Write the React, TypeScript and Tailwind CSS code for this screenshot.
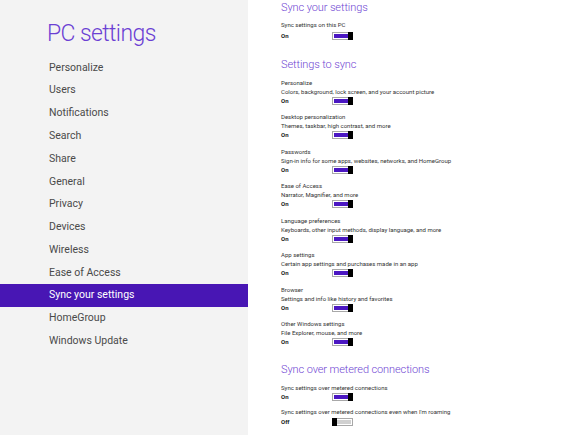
import React from 'react';

const navItems = [
  'Personalize',
  'Users',
  'Notifications',
  'Search',
  'Share',
  'General',
  'Privacy',
  'Devices',
  'Wireless',
  'Ease of Access',
  'Sync your settings',
  'HomeGroup',
  'Windows Update',
];

const syncItems = [
  { title: 'Personalize', desc: 'Colors, background, lock screen, and your account picture' },
  { title: 'Desktop personalization', desc: 'Themes, taskbar, high contrast, and more' },
  { title: 'Passwords', desc: 'Sign-in info for some apps, websites, networks, and HomeGroup' },
  { title: 'Ease of Access', desc: 'Narrator, Magnifier, and more' },
  { title: 'Language preferences', desc: 'Keyboards, other input methods, display language, and more' },
  { title: 'App settings', desc: 'Certain app settings and purchases made in an app' },
  { title: 'Browser', desc: 'Settings and info like history and favorites' },
  { title: 'Other Windows settings', desc: 'File Explorer, mouse, and more' },
];

const Toggle = ({ on }: { on: boolean }) => (
  <div className="relative h-[8px] w-[21px] border border-[#a8a8a8] bg-white p-[1px]">
    <div className={on ? 'h-full w-full bg-[#4b17c2]' : 'h-full w-full bg-[#d0d0d0]'} />
    <div
      className={
        on
          ? 'absolute right-[-1px] top-[-1px] h-[8px] w-[5px] bg-black'
          : 'absolute left-[-1px] top-[-1px] h-[8px] w-[5px] bg-black'
      }
    />
  </div>
);

const ToggleRow = ({ on }: { on: boolean }) => (
  <div className="flex h-[10px] items-center">
    <span className="w-[51px] text-[6px] font-bold leading-none text-[#222]">{on ? 'On' : 'Off'}</span>
    <Toggle on={on} />
  </div>
);

const SectionTitle = ({ children, className = '' }: { children: React.ReactNode; className?: string }) => (
  <h2 className={`h-[15px] text-[11px] font-light leading-[15px] tracking-[-0.1px] text-[#6f45d3] ${className}`}>
    {children}
  </h2>
);

const App = () => {
  return (
    <div className="flex h-[435px] w-[580px] overflow-hidden bg-white font-['Roboto','Open_Sans',sans-serif]">
      <aside className="h-full w-[248px] shrink-0 bg-[#f3f3f3]">
        <h1 className="pl-[47px] pt-[22px] text-[23px] font-light leading-none tracking-[-0.6px] text-[#6b3fd3]">
          PC settings
        </h1>
        <ul className="mt-[11px]">
          {navItems.map((item) => (
            <li
              key={item}
              className={
                item === 'Sync your settings'
                  ? 'flex h-[22.8px] items-center bg-[#4816b4] pl-[49px] text-[10.5px] text-white'
                  : 'flex h-[22.8px] items-center pl-[49px] text-[10.5px] text-[#4a4a4a]'
              }
            >
              {item}
            </li>
          ))}
        </ul>
      </aside>

      <main className="flex-1 pl-[33px] text-[6px] text-[#333]">
        <SectionTitle>Sync your settings</SectionTitle>
        <p className="mt-[5px] h-[9px] leading-[9px]">Sync settings on this PC</p>
        <div className="mt-[2px]">
          <ToggleRow on />
        </div>

        <SectionTitle className="mt-[15.5px]">Settings to sync</SectionTitle>
        <div className="mt-[6px] flex flex-col gap-[6.5px]">
          {syncItems.map((s) => (
            <div key={s.title}>
              <p className="h-[9px] leading-[9px]">{s.title}</p>
              <p className="h-[9px] leading-[9px]">{s.desc}</p>
              <ToggleRow on />
            </div>
          ))}
        </div>

        <SectionTitle className="mt-[15px]">Sync over metered connections</SectionTitle>
        <p className="mt-[6px] h-[9px] leading-[9px]">Sync settings over metered connections</p>
        <ToggleRow on />
        <p className="mt-[5px] h-[9px] leading-[9px]">Sync settings over metered connections even when I'm roaming</p>
        <div className="mt-[1px]">
          <ToggleRow on={false} />
        </div>
      </main>
    </div>
  );
};

export default App;
